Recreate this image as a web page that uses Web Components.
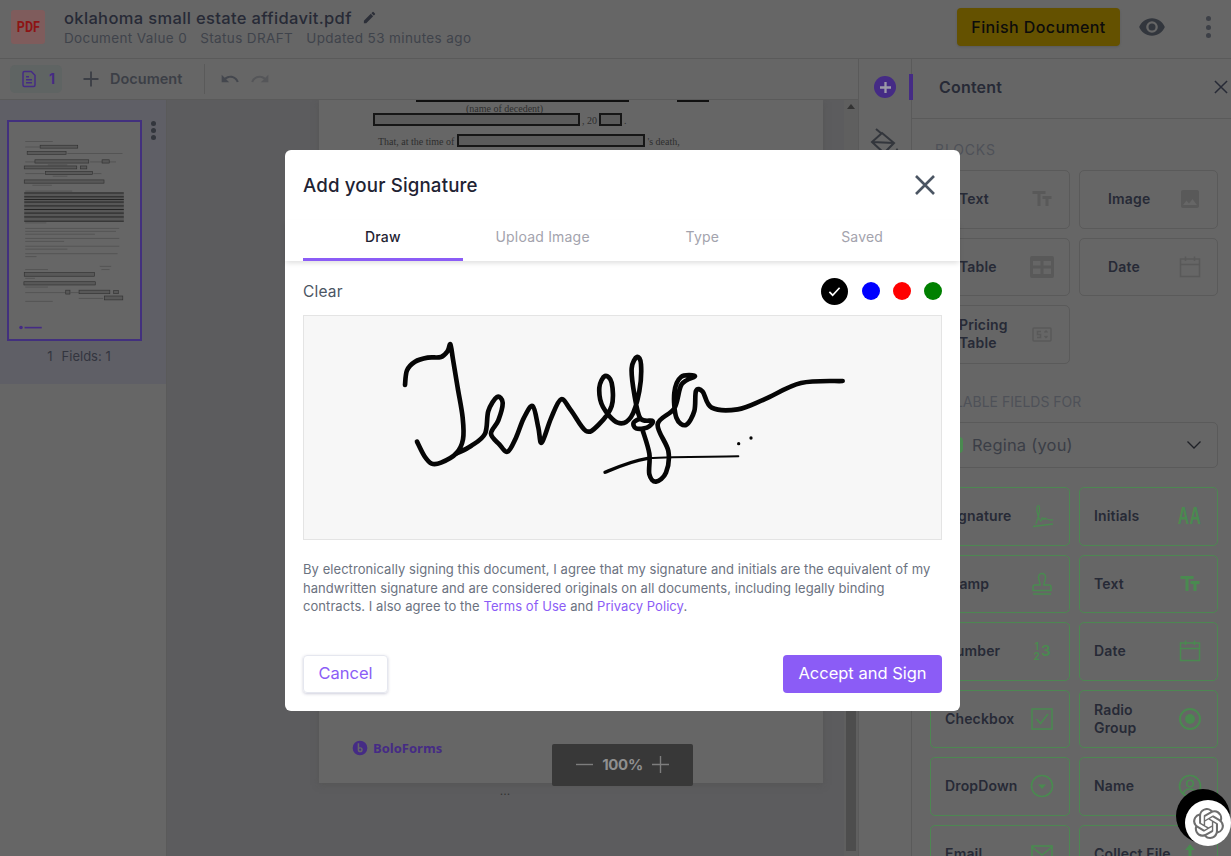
<!DOCTYPE html>
<html lang="en">
<head>
<meta charset="utf-8">
<title>oklahoma small estate affidavit.pdf</title>
<style>
    html, body {
        margin: 0;
        height: 100%;
        overflow: hidden;
    }
    body {
        position: relative;
        display: flex;
        flex-direction: column;
        background: #666666;
        font-family: Inter, "Noto Sans", sans-serif;
        color: #272a36;
        --ink: #272a36;
        --muted: #3f434b;
        --line: #5a5a5a;
        --purple: #452b85;
        --green: #4a8a50;
    }
    .workspace {
        display: flex;
        flex: 1;
        min-height: 0;
    }
    .doc-column {
        display: flex;
        flex-direction: column;
        width: 858px;
        flex: none;
        min-height: 0;
    }
    .doc-row {
        display: flex;
        flex: 1;
        min-height: 0;
    }
</style>
</head>
<body>
    <app-header></app-header>
    <div class="workspace">
        <div class="doc-column">
            <doc-toolbar></doc-toolbar>
            <div class="doc-row">
                <page-list></page-list>
                <doc-viewer></doc-viewer>
            </div>
        </div>
        <tool-rail></tool-rail>
        <content-panel>
            <panel-section title="BLOCKS" slot="blocks" style="--track:.8px">
                <field-card icon="text" wide>Text</field-card>
                <field-card icon="image" wide>Image</field-card>
                <field-card icon="table" wide>Table</field-card>
                <field-card icon="calendar" wide>Date</field-card>
                <field-card icon="pricing" wide>Pricing Table</field-card>
            </panel-section>
            <panel-section title="FILLABLE FIELDS FOR" slot="fields">
                <signer-select slot="before">Regina (you)</signer-select>
                <field-card icon="signature" green>Signature</field-card>
                <field-card icon="initials" green>Initials</field-card>
                <field-card icon="stamp" green>Stamp</field-card>
                <field-card icon="text" green>Text</field-card>
                <field-card icon="number" green>Number</field-card>
                <field-card icon="calendar" green>Date</field-card>
                <field-card icon="checkbox" green>Checkbox</field-card>
                <field-card icon="radio" green>Radio Group</field-card>
                <field-card icon="dropdown" green>DropDown</field-card>
                <field-card icon="name" green>Name</field-card>
                <field-card icon="email" green>Email</field-card>
                <field-card icon="upload" green>Collect File</field-card>
            </panel-section>
        </content-panel>
    </div>
    <zoom-control></zoom-control>
    <signature-modal></signature-modal>
    <chat-bubble></chat-bubble>

<script>
const RESET = `:host, *, *::before, *::after { box-sizing: border-box; }`;

const ICONS = {
    text: `<svg viewBox="0 0 24 24" fill="currentColor"><path d="M2.500 4v3h5v12h3V7h5V4h-13zm19 5h-9v3h3v7h3v-7h3V9z"/></svg>`,
    image: `<svg viewBox="0 0 24 24" fill="currentColor"><path d="M21 19V5c0-1.100-.9-2-2-2H5c-1.100 0-2 .9-2 2v14c0 1.100.9 2 2 2h14c1.100 0 2-.9 2-2zM8.500 13.500l2.500 3.010L14.500 12l4.500 6H5l3.500-4.500z"/></svg>`,
    table: `<svg viewBox="0 0 24 24" fill="currentColor"><path fill-rule="evenodd" d="M0 3a2 2 0 0 1 2-2h20a2 2 0 0 1 2 2v18a2 2 0 0 1-2 2H2a2 2 0 0 1-2-2zM3 6v4.500h7.500V6zm10.500 0v4.500H21V6zM3 13.500V19h7.500v-5.500zm10.500 0V19H21v-5.500z"/></svg>`,
    calendar: `<svg viewBox="0 0 24 24" fill="none" stroke="currentColor" stroke-width="1.500"><rect x="2.500" y="4" width="19" height="17.500"/><path d="M2.500 9.500h19M7.500 1.500V6M16.500 1.500V6"/></svg>`,
    pricing: `<svg viewBox="0 0 24 24" fill="none" stroke="currentColor" stroke-width="1.500"><rect x="3" y="6" width="18" height="13" rx="1"/><path d="M11 9.500H7.500v3h3v3H7M14.500 10.500l1.500-1.500 1.500 1.500M14.500 14l1.500 1.500 1.500-1.500"/></svg>`,
    signature: `<svg viewBox="0 0 24 24" fill="none" stroke="currentColor" stroke-width="1.300"><path d="M3 22.500L23 20M6 20C8 14 11 5 9 2 7 0 6 6 8 11c1 4 2 6 3 6 .5-3 2-4 2.500-2 .5 2 1.500-2 2.500-.5 1 1.500 3 1.500 7 1.500"/></svg>`,
    stamp: `<svg viewBox="0 0 24 24" fill="none" stroke="currentColor" stroke-width="1.500"><path d="M8.500 5a3.500 3.500 0 0 1 7 0c0 3-1.500 4-1.500 8h5a2 2 0 0 1 2 2v3.500H3V15a2 2 0 0 1 2-2h5c0-4-1.500-5-1.500-8zM3 22h18"/></svg>`,
    checkbox: `<svg viewBox="0 0 24 24" fill="none" stroke="currentColor" stroke-width="1.500"><rect x="2" y="2" width="20" height="20"/><path d="M6.500 12l4 4.500L18 7"/></svg>`,
    radio: `<svg viewBox="0 0 24 24" fill="none" stroke="currentColor" stroke-width="2"><circle cx="12" cy="12" r="10"/><circle cx="12" cy="12" r="5" fill="currentColor" stroke="none"/></svg>`,
    dropdown: `<svg viewBox="0 0 24 24" fill="none" stroke="currentColor" stroke-width="1.600"><circle cx="12" cy="12" r="10.500"/><path d="M8 10.500h8L12 15z" fill="currentColor" stroke="none"/></svg>`,
    name: `<svg viewBox="0 0 24 24" fill="none" stroke="currentColor" stroke-width="1.600"><circle cx="12" cy="12" r="10.500"/><circle cx="12" cy="9.500" r="3.300"/><path d="M5.500 19c1-3 3.500-4 6.500-4s5.500 1 6.500 4"/></svg>`,
    email: `<svg viewBox="0 0 24 24" fill="none" stroke="currentColor" stroke-width="1.600"><rect x="2" y="4" width="20" height="16"/><path d="M2 5l10 8 10-8"/></svg>`,
    upload: `<svg viewBox="0 0 24 24" fill="currentColor"><path d="M12 2l5 6h-3.500v10h-3V8H7z"/></svg>`,
    initials: `<span class="glyph-aa">AA</span>`,
    number: `<span class="glyph-num"><span>1<br>2</span><b>3</b></span>`
};

const SIGNATURE_STROKES = [
    [[42,162],[48,118],[72,92],[110,80],[150,78],[170,60],[178,40],[186,85],[200,170],[215,260],[216,325],[195,368],[150,395],[122,398],[100,375],[78,332]],
    [[195,368],[240,345],[282,308],[292,240],[318,198],[335,215],[322,268],[300,308],[325,340],[350,362],[375,320],[398,262],[425,225],[442,290],[452,335],[480,262],[510,205],[540,238],[585,300],[622,282],[662,225],[662,155],[642,135],[625,170],[636,228],[680,275],[720,258],[745,180],[750,100],[738,78],[722,112],[730,190],[748,262],[785,270],[768,290],[735,292],[728,275],[748,262]],
    [[755,298],[775,368],[775,430],[795,452],[825,425],[832,360],[800,280],[850,232],[872,160],[912,136],[870,138],[850,185],[856,260],[885,282],[910,240],[915,180],[935,182],[962,230],[1040,235],[1120,205],[1230,156],[1355,150]]
];

// catmull-rom through the hand traced points, the pad is just a picture here
function smoothPath(points) {
    let d = `M${points[0][0]} ${points[0][1]}`;
    for (let i = 0; i < points.length - 1; i++) {
        const p0 = points[i - 1] || points[i];
        const p1 = points[i];
        const p2 = points[i + 1];
        const p3 = points[i + 2] || p2;
        const c1 = [p1[0] + (p2[0] - p0[0]) / 6, p1[1] + (p2[1] - p0[1]) / 6];
        const c2 = [p2[0] - (p3[0] - p1[0]) / 6, p2[1] - (p3[1] - p1[1]) / 6];
        d += `C${c1[0]} ${c1[1]} ${c2[0]} ${c2[1]} ${p2[0]} ${p2[1]}`;
    }
    return d;
}

class BaseElement extends HTMLElement {
    constructor() {
        super();
        this.shadowDOM = this.attachShadow({ mode: 'open' });
    }
    connectedCallback() {
        this.shadowDOM.innerHTML = `<style>${RESET}${this.styles()}</style>${this.markup()}`;
    }
    styles() { return ''; }
    markup() { return '<slot></slot>'; }
}

class AppHeader extends BaseElement {
    styles() {
        return `
            :host {
                display: flex;
                align-items: center;
                height: 59px;
                flex: none;
                padding: 0 16px 4px 11px;
                background: #666666;
                border-bottom: 1px solid var(--line);
            }
            .pdf {
                width: 34px;
                height: 34px;
                display: flex;
                align-items: center;
                justify-content: center;
                background: #7f5c5c;
                border-radius: 3px;
                color: #8d1414;
                font: 700 14.500px "Roboto", sans-serif;
            }
            .pdf span { display: block; transform: scaleX(.86); }
            .info {
                margin-left: 19px;
                flex: 1;
            }
            .name {
                display: flex;
                align-items: center;
                gap: 10px;
                height: 20px;
                margin-bottom: 1px;
                font-size: 16.500px;
                font-weight: 500;
                line-height: 20px;
                letter-spacing: .35px;
                color: var(--ink);
            }
            .name svg { width: 15px; height: 15px; fill: #2c2f38; }
            .meta {
                display: flex;
                gap: 13px;
                font-size: 13.500px;
                line-height: 18px;
                letter-spacing: .38px;
                color: var(--muted);
            }
            .finish {
                width: 163px;
                height: 38px;
                display: flex;
                align-items: center;
                justify-content: center;
                margin-right: 18px;
                background: #645100;
                border-radius: 4px;
                box-shadow: 0 1px 2px #5a5a5a;
                color: #0c0c0c;
                font-size: 16px;
                font-weight: 500;
                letter-spacing: .4px;
            }
            .eye { width: 28px; height: 28px; fill: #32363d; margin-right: 40px; }
            .more { display: flex; flex-direction: column; gap: 3.500px; margin-right: 4px; }
            .more i { width: 5px; height: 5px; border-radius: 50%; background: #3d4047; }
        `;
    }
    markup() {
        return `
            <div class="pdf"><span>PDF</span></div>
            <div class="info">
                <div class="name">oklahoma small estate affidavit.pdf
                    <svg viewBox="0 0 24 24"><path d="M3 17.250V21h3.750L17.810 9.940l-3.750-3.750L3 17.250zM20.710 7.040a1 1 0 0 0 0-1.410l-2.340-2.340a1 1 0 0 0-1.410 0l-1.830 1.830 3.750 3.750 1.830-1.830z"/></svg>
                </div>
                <div class="meta"><span>Document Value 0</span><span>Status DRAFT</span><span>Updated 53 minutes ago</span></div>
            </div>
            <div class="finish">Finish Document</div>
            <svg class="eye" viewBox="0 0 24 24"><path d="M12 4.500C7 4.500 2.730 7.610 1 12c1.730 4.390 6 7.500 11 7.500s9.270-3.110 11-7.500c-1.730-4.390-6-7.500-11-7.500zM12 17a5 5 0 1 1 0-10 5 5 0 0 1 0 10zm0-8a3 3 0 1 0 0 6 3 3 0 0 0 0-6z"/></svg>
            <div class="more"><i></i><i></i><i></i></div>
        `;
    }
}

class DocToolbar extends BaseElement {
    styles() {
        return `
            :host {
                display: flex;
                align-items: center;
                height: 41px;
                flex: none;
                padding: 0 0 1px 10px;
                background: #666666;
                border-bottom: 1px solid var(--line);
            }
            .pages {
                display: flex;
                align-items: center;
                width: 52px;
                height: 28px;
                padding-left: 10px;
                gap: 11px;
                background: #5f6463;
                border-radius: 5px;
                color: var(--purple);
                font-size: 14px;
                font-weight: 700;
            }
            .pages svg { width: 18px; height: 18px; fill: none; stroke: var(--purple); stroke-width: 2; }
            .add {
                display: flex;
                align-items: center;
                margin-left: 19px;
                gap: 9px;
                font-size: 14.500px;
                font-weight: 600;
                color: #3c3f46;
                width: 123px;
            }
            .add svg { width: 20px; height: 20px; flex: none; stroke: #3c3f46; stroke-width: 2.200; }
            .sep { width: 1px; height: 30px; background: #5a5a5a; }
            .undo { margin-left: 15px; width: 20px; height: 20px; fill: #44474e; }
            .redo { margin-left: 10px; width: 20px; height: 20px; fill: #555659; }
        `;
    }
    markup() {
        return `
            <div class="pages">
                <svg viewBox="0 0 24 24"><path d="M6 2h9l5 5v13a2 2 0 0 1-2 2H6a2 2 0 0 1-2-2V4a2 2 0 0 1 2-2zM8 9h4M8 13h8M8 17h8"/></svg>
                <span>1</span>
            </div>
            <div class="add">
                <svg viewBox="0 0 24 24"><path d="M12 3v18M3 12h18"/></svg>
                <span>Document</span>
            </div>
            <div class="sep"></div>
            <svg class="undo" viewBox="0 0 24 24"><path d="M12.500 8c-2.650 0-5.050.99-6.900 2.600L2 7v9h9l-3.620-3.620c1.390-1.160 3.160-1.880 5.120-1.880 3.540 0 6.550 2.310 7.600 5.500l2.370-.78C21.080 11.030 17.150 8 12.500 8z"/></svg>
            <svg class="redo" viewBox="0 0 24 24"><path d="M18.400 10.600C16.550 8.990 14.150 8 11.500 8c-4.650 0-8.580 3.030-9.960 7.220l2.360.78c1.050-3.190 4.050-5.500 7.600-5.500 1.950 0 3.730.72 5.120 1.880L13 16h9V7l-3.600 3.600z"/></svg>
        `;
    }
}

class PageList extends BaseElement {
    styles() {
        return `
            :host {
                display: block;
                width: 166px;
                flex: none;
                background: #666666;
            }
            .active {
                position: relative;
                height: 284px;
                padding: 20px 0 0 7px;
                background: #5f5f66;
            }
            .frame {
                display: block;
                width: 135px;
                height: 221px;
                border: 2px solid #42307e;
                background: #666666;
            }
            .dots {
                position: absolute;
                top: 21px;
                left: 150.500px;
                display: flex;
                flex-direction: column;
                gap: 2px;
            }
            .dots i { width: 5px; height: 5px; border-radius: 50%; background: #33363d; }
            .label {
                display: flex;
                gap: 9px;
                justify-content: center;
                width: 144px;
                margin-top: 6px;
                font-size: 13px;
                line-height: 18px;
                font-weight: 400;
                color: #33353f;
            }
        `;
    }
    thumbnail() {
        const rect = (x, y, w, h) => `<rect x="${x}" y="${y}" width="${w}" height="${h}" fill="#585858" stroke="#2e2e2e" stroke-width="1.800"/>`;
        const line = (x, y, w) => `<rect x="${x}" y="${y}" width="${w}" height="3" fill="#545454"/>`;
        let table = `<rect x="67" y="244" width="307" height="88" fill="#575757"/>`;
        [244, 256, 264, 272, 284, 295, 306, 318, 331].forEach(y => {
            table += `<rect x="67" y="${y}" width="307" height="2.500" fill="#1a1a1a"/>`;
        });
        const lines = [[70,85,85],[70,102,45],[200,122,170],[70,148,30],[270,148,80],[140,157,60],[70,184,60],[280,184,25],[155,192,45],[92,220,60],[70,238,145],[70,336,65],
            [70,353,290],[70,362,280],[70,371,215],[70,384,290],[70,393,120],[70,408,290],[70,417,130],[70,431,285],[70,440,35],[300,470,35],[70,480,70],[305,480,25],
            [70,507,30],[70,534,70],[70,551,125],[210,551,25],[70,578,85],[235,569,75]];
        return `
            <svg class="frame" viewBox="20 32 404 658">
                ${lines.map(l => line(l[0], l[1], l[2])).join('')}
                ${rect(116, 98, 116, 9)}${rect(76, 117, 120, 9)}${rect(100, 143, 166, 10)}${rect(307, 143, 22, 10)}
                ${rect(67, 162, 162, 9)}${rect(241, 162, 19, 9)}${rect(133, 179, 145, 9)}${rect(67, 205, 246, 10)}
                ${table}
                ${rect(67, 491, 217, 11)}${rect(66, 519, 220, 10)}${rect(195, 545, 13, 12)}${rect(236, 545, 95, 11)}${rect(343, 546, 14, 10)}${rect(314, 563, 57, 12)}
                <circle cx="57" cy="660" r="5.500" fill="#452b85"/>
                <rect x="68" y="658" width="53" height="5" fill="#452b85"/>
            </svg>
        `;
    }
    markup() {
        return `
            <div class="active">
                ${this.thumbnail()}
                <div class="dots"><i></i><i></i><i></i></div>
                <div class="label"><span>1</span><span>Fields: 1</span></div>
            </div>
        `;
    }
}

class DocViewer extends BaseElement {
    styles() {
        return `
            :host {
                display: flex;
                flex: 1;
                position: relative;
                padding-left: 152px;
                background: #5c5c5e;
                border-left: 1px solid #5a5a5a;
                overflow: hidden;
            }
            .page {
                display: flex;
                flex-direction: column;
                width: 504px;
                height: 683px;
                padding: 0 0 26px 54px;
                background: #666666;
                box-shadow: 0 2px 6px #555555;
                font: 10px/1 "Liberation Serif", serif;
                color: #2e2e2e;
            }
            .bars { display: flex; height: 2px; margin-left: 43px; }
            .bars i { height: 2px; background: #111111; }
            .caption { margin: 1px 0 0 93px; height: 9px; line-height: 11px; }
            .row { display: flex; align-items: flex-end; gap: 2px; }
            .field { display: block; height: 13px; background: #5b5b5b; border: 2px solid #161616; }
            .logo {
                display: flex;
                align-items: center;
                gap: 5px;
                margin: auto 0 0 -21px;
                font: 700 13px "Open Sans", sans-serif;
                color: #452b85;
            }
            .logo svg { width: 16px; height: 16px; }
            .more {
                position: absolute;
                left: 333px;
                top: 687px;
                font: 700 9px/1 Inter, sans-serif;
                color: #333333;
                letter-spacing: .5px;
            }
            .track {
                position: absolute;
                top: 0;
                bottom: 0;
                right: 0;
                width: 14px;
                background: #5f5f5f;
            }
            .arrow {
                position: absolute;
                top: 4px;
                left: 3px;
                width: 0;
                height: 0;
                border: 4px solid transparent;
                border-top: 0;
                border-bottom: 5px solid #333333;
            }
            .thumb { position: absolute; top: 60px; bottom: 5px; left: 2px; width: 10px; background: #4d4d4d; }
        `;
    }
    markup() {
        return `
            <div class="page">
                <div class="bars"><i style="width:213px"></i><i style="width:32px;margin-left:48px"></i></div>
                <div class="caption">(name of decedent)</div>
                <div class="row" style="margin-top:1px"><span class="field" style="width:207px"></span><span>, 20</span><span class="field" style="width:23px"></span><span>.</span></div>
                <div class="row" style="margin:8px 0 0 5px"><span style="margin-right:1px">That, at the time of</span><span class="field" style="width:188px"></span><span>'s death,</span></div>
                <div class="logo">
                    <svg viewBox="0 0 24 24"><path fill-rule="evenodd" fill="#452b85" d="M12 1a11 11 0 1 1 0 22 11 11 0 0 1 0-22zM8.500 5v9.500a3.800 3.800 0 1 0 3.800-3.800c-.5 0-1 .1-1.500.3V5zm3.800 7.800a1.700 1.700 0 1 1 0 3.400 1.700 1.700 0 0 1 0-3.400z"/></svg>
                    <span>BoloForms</span>
                </div>
            </div>
            <div class="more">...</div>
            <div class="track"><div class="arrow"></div><div class="thumb"></div></div>
        `;
    }
}

class ToolRail extends BaseElement {
    styles() {
        return `
            :host {
                display: flex;
                flex-direction: column;
                align-items: center;
                width: 54px;
                flex: none;
                position: relative;
                padding: 17px 0 0 0;
                background: #666666;
                border-left: 1px solid var(--line);
                border-right: 1px solid var(--line);
            }
            .plus {
                display: flex;
                align-items: center;
                justify-content: center;
                width: 22px;
                height: 22px;
                border-radius: 50%;
                background: var(--purple);
            }
            .plus svg { width: 11px; height: 11px; stroke: #9c9aa8; stroke-width: 2.500; }
            .bar {
                position: absolute;
                left: 50px;
                top: 15px;
                width: 4px;
                height: 26px;
                background: var(--purple);
            }
            .fill { width: 30px; height: 30px; margin-top: 30px; fill: none; stroke: #33363c; stroke-width: 2; }
        `;
    }
    markup() {
        return `
            <div class="plus"><svg viewBox="0 0 12 12"><path d="M6 0v12M0 6h12"/></svg></div>
            <div class="bar"></div>
            <svg class="fill" viewBox="0 0 30 30"><path d="M6 1l6 5M12 5l12 10-10 10L2 14zM2 14l22 1"/><path d="M27 20c-2 3-3 4-3 5a3 3 0 0 0 6 0c0-1-1-2-3-5z" fill="#33363c" stroke="none"/></svg>
        `;
    }
}

class ContentPanel extends BaseElement {
    styles() {
        return `
            :host {
                display: block;
                flex: 1;
                min-width: 0;
                overflow: hidden;
                background: #666666;
            }
            header {
                display: flex;
                align-items: center;
                justify-content: space-between;
                height: 60px;
                padding: 0 3px 4px 27px;
                border-bottom: 1px solid var(--line);
                font-size: 16px;
                font-weight: 600;
                letter-spacing: .2px;
                color: var(--ink);
            }
            header svg { width: 14px; height: 14px; stroke: #272a36; stroke-width: 1.600; }
            .scroll {
                display: flex;
                flex-direction: column;
                gap: 28.500px;
                padding: 21px 13px 0 18px;
            }
        `;
    }
    markup() {
        return `
            <header>
                <span>Content</span>
                <svg viewBox="0 0 15 15"><path d="M1 1l13 13M14 1L1 14"/></svg>
            </header>
            <div class="scroll">
                <slot name="blocks"></slot>
                <slot name="fields"></slot>
            </div>
        `;
    }
}

class PanelSection extends BaseElement {
    styles() {
        return `
            :host { display: block; }
            h3 {
                margin: 0 0 10px 5px;
                font-size: 14px;
                line-height: 20px;
                font-weight: 400;
                letter-spacing: var(--track, 0);
                color: #4e5158;
            }
            ::slotted([slot="before"]) { margin-bottom: 19px; }
            .grid {
                display: grid;
                grid-template-columns: 140px 139px;
                grid-auto-rows: 58.500px;
                gap: 9px;
            }
        `;
    }
    markup() {
        return `
            <h3>${this.getAttribute('title')}</h3>
            <slot name="before"></slot>
            <div class="grid"><slot></slot></div>
        `;
    }
}

class FieldCard extends BaseElement {
    styles() {
        const green = this.hasAttribute('green');
        const wide = this.hasAttribute('wide');
        return `
            :host {
                display: flex;
                align-items: center;
                justify-content: space-between;
                padding: 0 ${wide ? '15px 0 28px' : '15px 0 14px'};
                border: 1px solid ${green ? '#4d8752' : '#5a5a5a'};
                border-radius: 5px;
                font-size: 14px;
                font-weight: 600;
                letter-spacing: .15px;
                line-height: 18px;
                color: var(--ink);
            }
            .icon {
                width: 24px;
                height: 24px;
                flex: none;
                display: flex;
                align-items: center;
                justify-content: center;
                color: ${green ? 'var(--green)' : '#595959'};
            }
            .text { max-width: ${wide ? 76 : 82}px; }
            svg { width: 100%; height: 100%; display: block; }
            .glyph-aa { font: 700 23px/1 "Liberation Sans", sans-serif; transform: scaleX(.68); letter-spacing: 1px; }
            .glyph-num { display: flex; align-items: center; gap: 1px; font: 700 10px/10px Inter, sans-serif; text-align: center; }
            .glyph-num b { font-size: 15px; font-weight: 600; }
        `;
    }
    markup() {
        return `
            <span class="text"><slot></slot></span>
            <span class="icon">${ICONS[this.getAttribute('icon')] || ''}</span>
        `;
    }
}

class SignerSelect extends BaseElement {
    styles() {
        return `
            :host {
                display: flex;
                align-items: center;
                height: 46px;
                padding: 0 15px 0 19px;
                border: 1px solid #5a5a5a;
                border-radius: 5px;
                font-size: 16.500px;
                color: #3b3e46;
            }
            .dot { width: 13px; height: 16px; border-radius: 4px; background: var(--green); margin-right: 9px; }
            .name { flex: 1; letter-spacing: .2px; }
            svg { width: 16px; height: 16px; stroke: #1f2127; stroke-width: 1.300; fill: none; }
        `;
    }
    markup() {
        return `
            <span class="dot"></span>
            <span class="name"><slot></slot></span>
            <svg viewBox="0 0 16 16"><path d="M1.500 4.500L8 11l6.500-6.500"/></svg>
        `;
    }
}

class ZoomControl extends BaseElement {
    styles() {
        return `
            :host {
                position: absolute;
                left: 552px;
                top: 744px;
                display: flex;
                align-items: center;
                justify-content: center;
                gap: 9px;
                width: 141px;
                height: 42px;
                padding-bottom: 1px;
                background: #383838;
                border-radius: 2px;
                color: #8f8f8f;
                font-size: 15px;
                font-weight: 700;
                letter-spacing: -.3px;
            }
            svg { width: 17px; height: 17px; stroke: #7d7d7d; stroke-width: 1.400; }
        `;
    }
    markup() {
        return `
            <svg viewBox="0 0 17 17"><path d="M0 8.500h17"/></svg>
            <span>100%</span>
            <svg viewBox="0 0 17 17"><path d="M0 8.500h17M8.500 0v17"/></svg>
        `;
    }
}

class SignaturePad extends BaseElement {
    styles() {
        return `
            :host {
                display: block;
                height: 225px;
                flex: none;
                background: #f7f7f7;
                border: 1px solid #e4e4e4;
            }
            svg { display: block; width: 100%; height: 100%; }
        `;
    }
    markup() {
        const main = SIGNATURE_STROKES.map(s => `<path d="${smoothPath(s)}"/>`).join('');
        // viewBox is in 3x px measured from the pad corner
        return `
            <svg viewBox="-261 -45 1911 669" fill="none" stroke="#060606" stroke-linecap="round" stroke-linejoin="round">
                <g stroke-width="14">${main}</g>
                <path stroke-width="10" d="M642 424C680 408 720 390 770 382"/>
                <path stroke-width="6" d="M770 382C860 376 960 378 1042 376"/>
                <circle cx="1043" cy="338" r="5" fill="#060606" stroke="none"/>
                <circle cx="1080" cy="321" r="5" fill="#060606" stroke="none"/>
            </svg>
        `;
    }
}

class SignatureModal extends BaseElement {
    styles() {
        return `
            :host {
                position: absolute;
                left: 285px;
                top: 150px;
                display: flex;
                flex-direction: column;
                width: 675px;
                height: 561px;
                background: #ffffff;
                border-radius: 6px;
                color: #1f2333;
            }
            .head {
                display: flex;
                align-items: center;
                justify-content: space-between;
                height: 70px;
                flex: none;
                padding: 0 23px 0 18px;
            }
            h2 { margin: 0; font-size: 18.700px; font-weight: 500; letter-spacing: .15px; }
            .head svg { width: 24px; height: 24px; stroke: #4b5563; stroke-width: 2.600; }
            .tabs {
                display: grid;
                grid-template-columns: repeat(4, 1fr);
                height: 41px;
                flex: none;
                padding: 0 18px;
                box-shadow: 0 3px 5px -1px rgba(0, 0, 0, .13);
                font-size: 14px;
                letter-spacing: .2px;
                color: #a3a3ad;
            }
            .tabs div { display: flex; align-items: center; justify-content: center; padding-bottom: 9px; }
            .tabs .on { color: #1f2333; font-weight: 500; border-bottom: 3px solid #8b5cf6; padding-bottom: 6px; }
            .body { padding: 0 18px; flex: 1; display: flex; flex-direction: column; }
            .tools {
                display: flex;
                align-items: center;
                height: 54px;
                padding-top: 6px;
                flex: none;
                font-size: 15.500px;
                color: #4b5563;
            }
            .clear { flex: 1; letter-spacing: .2px; }
            .swatches { display: flex; align-items: center; gap: 13px; }
            .swatch { width: 18px; height: 18px; border-radius: 50%; }
            .swatch.current {
                display: flex;
                align-items: center;
                justify-content: center;
                width: 27px;
                height: 27px;
                margin-right: 1px;
            }
            .swatch svg { width: 13px; height: 13px; stroke: #ffffff; stroke-width: 1.800; fill: none; }
            p {
                margin: 20px 0 0;
                font-size: 13px;
                line-height: 18.500px;
                color: #6b7280;
                letter-spacing: .06px;
            }
            p span { color: #8b5cf6; }
            .actions {
                display: flex;
                justify-content: space-between;
                margin-top: auto;
                padding-bottom: 18px;
            }
            .btn {
                display: flex;
                align-items: center;
                justify-content: center;
                height: 38px;
                padding-bottom: 3px;
                border-radius: 4px;
                font-size: 16.500px;
            }
            .cancel {
                width: 85px;
                color: #8b5cf6;
                border: 1px solid #e5e7ef;
                box-shadow: 0 1px 3px rgba(60, 60, 110, .25);
            }
            .accept { width: 159px; background: #8b5cf6; color: #ffffff; }
        `;
    }
    markup() {
        return `
            <div class="head">
                <h2>Add your Signature</h2>
                <svg viewBox="0 0 24 24"><path d="M3 3l18 18M21 3L3 21"/></svg>
            </div>
            <div class="tabs">
                <div class="on">Draw</div><div>Upload Image</div><div>Type</div><div>Saved</div>
            </div>
            <div class="body">
                <div class="tools">
                    <span class="clear">Clear</span>
                    <div class="swatches">
                        <span class="swatch current" style="background:#000000">
                            <svg viewBox="0 0 14 14"><path d="M1.500 7.500l3.500 3.500 7.500-8"/></svg>
                        </span>
                        <span class="swatch" style="background:#0000ff"></span>
                        <span class="swatch" style="background:#ff0000"></span>
                        <span class="swatch" style="background:#008000"></span>
                    </div>
                </div>
                <signature-pad></signature-pad>
                <p>By electronically signing this document, I agree that my signature and initials are the equivalent of my handwritten signature and are considered originals on all documents, including legally binding contracts. I also agree to the <span>Terms of Use</span> and <span>Privacy Policy</span>.</p>
                <div class="actions">
                    <div class="btn cancel">Cancel</div>
                    <div class="btn accept">Accept and Sign</div>
                </div>
            </div>
        `;
    }
}

class ChatBubble extends BaseElement {
    styles() {
        return `
            :host {
                position: absolute;
                left: 1176px;
                top: 789px;
                width: 54px;
                height: 54px;
                border-radius: 50%;
                background: #000000;
            }
            .inner {
                position: absolute;
                left: 9px;
                top: 11px;
                width: 46px;
                height: 46px;
                display: flex;
                align-items: center;
                justify-content: center;
                border-radius: 50%;
                background: #ffffff;
            }
            svg { width: 31px; height: 31px; fill: #6e6e6e; }
        `;
    }
    markup() {
        return `
            <div class="inner">
                <svg viewBox="0 0 24 24"><path d="M22.2819 9.8211a5.9847 5.9847 0 0 0-.5157-4.9108 6.0462 6.0462 0 0 0-6.5098-2.9A6.0651 6.0651 0 0 0 4.9807 4.1818a5.9847 5.9847 0 0 0-3.9977 2.9 6.0462 6.0462 0 0 0 .7427 7.0966 5.98 5.98 0 0 0 .511 4.9107 6.051 6.051 0 0 0 6.5146 2.9001A5.9847 5.9847 0 0 0 13.2599 24a6.0557 6.0557 0 0 0 5.7718-4.2058 5.9894 5.9894 0 0 0 3.9977-2.9001 6.0557 6.0557 0 0 0-.7475-7.0729zm-9.022 12.6081a4.4755 4.4755 0 0 1-2.8764-1.0408l.1419-.0804 4.7783-2.7582a.7948.7948 0 0 0 .3927-.6813v-6.7369l2.02 1.1686a.071.071 0 0 1 .038.052v5.5826a4.504 4.504 0 0 1-4.4945 4.4944zm-9.6607-4.1254a4.4708 4.4708 0 0 1-.5346-3.0137l.142.0852 4.783 2.7582a.7712.7712 0 0 0 .7806 0l5.8428-3.3685v2.3324a.0804.0804 0 0 1-.0332.0615L9.74 19.9502a4.4992 4.4992 0 0 1-6.1408-1.6464zM2.3408 7.8956a4.485 4.485 0 0 1 2.3655-1.9728V11.6a.7664.7664 0 0 0 .3879.6765l5.8144 3.3543-2.0201 1.1685a.0757.0757 0 0 1-.071 0l-4.8303-2.7865A4.504 4.504 0 0 1 2.3408 7.872zm16.5963 3.8558L13.1038 8.364 15.1192 7.2a.0757.0757 0 0 1 .071 0l4.8303 2.7913a4.4944 4.4944 0 0 1-.6765 8.1042v-5.6772a.79.79 0 0 0-.407-.667zm2.0107-3.0231l-.142-.0852-4.7735-2.7818a.7759.7759 0 0 0-.7854 0L9.409 9.2297V6.8974a.0662.0662 0 0 1 .0284-.0615l4.8303-2.7866a4.4992 4.4992 0 0 1 6.6802 4.66zM8.3065 12.863l-2.02-1.1638a.0804.0804 0 0 1-.038-.0567V6.0742a4.4992 4.4992 0 0 1 7.3757-3.4537l-.142.0805L8.704 5.459a.7948.7948 0 0 0-.3927.6813zm1.0976-2.3654l2.602-1.4998 2.6069 1.4998v2.9994l-2.5974 1.4997-2.6067-1.4997Z"/></svg>
            </div>
        `;
    }
}

customElements.define('app-header', AppHeader);
customElements.define('doc-toolbar', DocToolbar);
customElements.define('page-list', PageList);
customElements.define('doc-viewer', DocViewer);
customElements.define('tool-rail', ToolRail);
customElements.define('content-panel', ContentPanel);
customElements.define('panel-section', PanelSection);
customElements.define('field-card', FieldCard);
customElements.define('signer-select', SignerSelect);
customElements.define('zoom-control', ZoomControl);
customElements.define('signature-pad', SignaturePad);
customElements.define('signature-modal', SignatureModal);
customElements.define('chat-bubble', ChatBubble);
</script>
</body>
</html>
